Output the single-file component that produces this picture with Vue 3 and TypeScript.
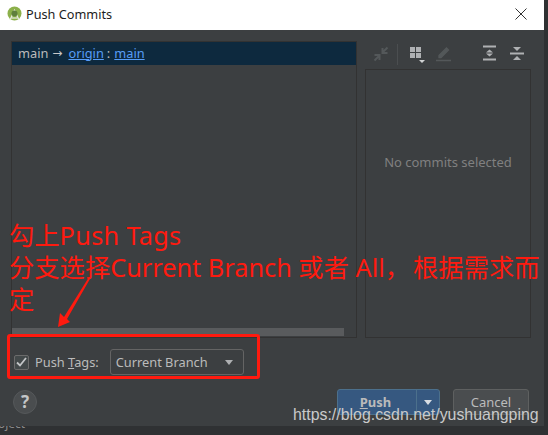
<script setup lang="ts">
const title: string = 'Push Commits'
</script>

<template>
  <div class="screen">
    <div class="bottom-strip">Project</div>
    <div class="dialog">
      <header class="titlebar">
        <svg class="logo" width="15" height="16" viewBox="0 0 15 16">
          <circle cx="7.500" cy="7.500" r="7" fill="#8cb04a" />
          <path d="M3 14 7.500 4.500 12 14" fill="none" stroke="#e8e8e0" stroke-width="1.400" />
          <circle cx="7.500" cy="7.500" r="3" fill="#5f7f3c" />
          <path d="M4.500 12h6" stroke="#dfe4d0" stroke-width="1.400" />
        </svg>
        <span class="title">{{ title }}</span>
        <svg class="close" width="12" height="12" viewBox="0 0 12 12">
          <path d="M.5.5l11 11M11.500.5l-11 11" stroke="#333" stroke-width="1" fill="none" />
        </svg>
      </header>

      <main class="content">
        <div class="panes">
          <section class="tree">
            <div class="branch-row">
              <span>main</span>
              <span class="arrow">→</span>
              <a class="link">origin</a>
              <span class="colon">:</span>
              <a class="link">main</a>
            </div>
            <div class="tree-body"></div>
            <div class="scrollbar"></div>
          </section>

          <section class="details">
            <div class="toolbar">
              <svg class="ico" width="16" height="16" viewBox="0 0 16 16">
                <path d="M14.500 1.500 10 6M9.500 2v5h5M1.500 14.500 6 10M6.500 14V9h-5" fill="none" stroke="#54585a" stroke-width="2" />
              </svg>
              <span class="divider"></span>
              <svg class="ico grid" width="16" height="18" viewBox="0 0 16 18">
                <path d="M1 2h5v5H1zM7 2h5v5H7zM1 8h5v5H1zM7 8h5v5H7z" fill="#afb1b3" />
                <path d="M10 15h6l-3 3z" fill="#d0d2d3" />
              </svg>
              <svg class="ico pencil" width="16" height="16" viewBox="0 0 16 16">
                <path d="M4 9.500 11.500 2l2 2L6 11.500H4zM1 14.500h15" fill="#54585a" stroke="#54585a" stroke-width="1.300" />
              </svg>
              <svg class="ico expand" width="13" height="18" viewBox="0 0 13 18">
                <path d="M0 .5h13v2H0zM0 13.500h13v2H0z" fill="#afb1b3" />
                <path d="M6.500 4.500 10 7.500H3zM6.500 11.500 3 8.500h7z" fill="#afb1b3" />
              </svg>
              <svg class="ico collapse" width="14" height="18" viewBox="0 0 14 18">
                <path d="M0 7.500h14v2H0z" fill="#afb1b3" />
                <path d="M3 2h8L7 6zM7 11l4 4H3z" fill="#afb1b3" />
              </svg>
            </div>
            <div class="details-body">No commits selected</div>
          </section>
        </div>

        <div class="tags-row">
          <span class="checkbox">
            <svg width="11" height="10" viewBox="0 0 11 10">
              <path d="M1 5.500 4 8.500 10 1" fill="none" stroke="#c4c6c8" stroke-width="1.800" />
            </svg>
          </span>
          <span class="tags-label">Push <u>T</u>ags:</span>
          <div class="select">
            <span>Current Branch</span>
            <i class="caret"></i>
          </div>
        </div>

        <footer class="actions">
          <button class="help" type="button">?</button>
          <div class="buttons">
            <div class="push">
              <span class="push-main"><u>P</u>ush</span>
              <span class="push-more"><i class="caret light"></i></span>
            </div>
            <button class="cancel" type="button">Cancel</button>
          </div>
        </footer>
      </main>
    </div>

    <div class="annotation">
      <div class="note-line">勾上<span class="wide">Push Tags</span></div>
      <div class="note-line">分支选择Current Branch 或者 All，<span class="gap">根据需求而</span></div>
      <div class="note-line">定</div>
    </div>
    <svg class="pointer" width="44" height="56" viewBox="0 0 44 56">
      <path d="M39 2 14 42l-4-4-2 14 12-5-3-3L40.500 3z" fill="#ff1a0f" />
    </svg>
    <div class="red-box"></div>
    <div class="watermark">https://blog.csdn.net/yushuangping</div>
  </div>
</template>

<style scoped>
.screen {
  position: relative;
  width: 548px;
  height: 435px;
  overflow: hidden;
  background: #2f3133;
  font-family: "Noto Sans", "Open Sans", sans-serif;
}
.dialog {
  position: relative;
  width: 544px;
  height: 426px;
  display: flex;
  flex-direction: column;
  background: #3c3f41;
}
.titlebar {
  height: 30px;
  flex: none;
  display: flex;
  align-items: center;
  padding: 0 17px 2px 7px;
  background: #fff;
  box-sizing: border-box;
}
.logo { margin-right: 4px; }
.title {
  font-size: 12.700px;
  color: #1d1d1d;
}
.close { margin-left: auto; }
.content {
  flex: 1;
  display: flex;
  flex-direction: column;
  padding: 11px 13px 0 11px;
  min-height: 0;
}
.panes {
  height: 297px;
  display: flex;
  gap: 8px;
  flex: none;
}
.tree {
  width: 346px;
  box-sizing: border-box;
  border: 1px solid #323232;
  display: flex;
  flex-direction: column;
}
.branch-row {
  height: 23px;
  flex: none;
  box-sizing: border-box;
  display: flex;
  align-items: center;
  gap: 4px;
  padding: 0 0 2px 6px;
  background: #0d293e;
  color: #bbbbbb;
  font-size: 12.800px;
}
.arrow {
  margin-right: 2px;
  font-size: 12px;
  color: #c8c8c8;
  font-family: "DejaVu Sans", sans-serif;
}
.colon { margin-left: -1px; }
.link {
  color: #589df6;
  text-decoration: underline;
}
.tree-body { flex: 1; }
.scrollbar {
  height: 8px;
  width: 332px;
  margin-bottom: 1px;
  background: #595b5d;
}
.details {
  flex: 1;
  display: flex;
  flex-direction: column;
}
.toolbar {
  height: 28px;
  flex: none;
  box-sizing: border-box;
  display: flex;
  align-items: center;
  padding: 0 0 2px 8px;
}
.ico { flex: none; }
.divider {
  width: 1px;
  height: 21px;
  margin-left: 8px;
  background: #4b4e50;
}
.grid { margin-left: 11px; }
.pencil { margin-left: 10px; }
.expand { margin-left: 32px; }
.collapse { margin-left: 14px; }
.details-body {
  flex: 1;
  box-sizing: border-box;
  border: 1px solid #323232;
  display: flex;
  align-items: center;
  justify-content: center;
  padding-bottom: 83px;
  color: #808080;
  font-size: 13px;
}
.tags-row {
  display: flex;
  align-items: center;
  height: 26px;
  margin: 11px 0 0 3px;
  color: #bbbbbb;
  font-size: 12.800px;
}
.checkbox {
  width: 13px;
  height: 13px;
  display: flex;
  align-items: center;
  justify-content: center;
  background: #43494a;
  border: 1px solid #6b6b6b;
  border-radius: 2px;
}
.tags-label { margin-left: 6px; }
.select {
  width: 134px;
  height: 26px;
  box-sizing: border-box;
  margin-left: 11px;
  padding: 0 10px 0 5px;
  display: flex;
  align-items: center;
  justify-content: space-between;
  border: 1px solid #646464;
  border-radius: 3px;
  background: #3c3f41;
}
.caret {
  width: 0;
  height: 0;
  border-left: 4.500px solid transparent;
  border-right: 4.500px solid transparent;
  border-top: 5px solid #aeb0b2;
}
.caret.light { border-top-color: #d8dde3; }
.actions {
  flex: 1;
  display: flex;
  justify-content: space-between;
  padding: 15px 0 0 2px;
}
.help {
  width: 24px;
  height: 24px;
  padding: 0;
  border: 1px solid #55585a;
  border-radius: 50%;
  background: #4a4d4f;
  color: #c4c6c8;
  font: 700 17px "Noto Sans", sans-serif;
  line-height: 20px;
}
.buttons {
  display: flex;
  gap: 13px;
  height: 26px;
  margin-right: 2px;
  margin-top: -1px;
}
.push {
  width: 103px;
  display: flex;
  box-sizing: border-box;
  border: 1px solid #4c708c;
  border-radius: 3px;
  background: #365880;
  color: #bbbbbb;
  font-size: 13px;
  font-weight: 700;
}
.push-main {
  width: 79px;
  box-sizing: border-box;
  padding-right: 3px;
  display: flex;
  align-items: center;
  justify-content: center;
  white-space: pre;
  border-right: 1px solid #4c708c;
}
.push-more {
  flex: 1;
  display: flex;
  align-items: center;
  justify-content: center;
}
.cancel {
  width: 76px;
  padding: 0;
  border: 1px solid #5e6060;
  border-radius: 3px;
  background: #4a4d4f;
  color: #bbbbbb;
  font: 13px "Noto Sans", sans-serif;
}
.bottom-strip {
  position: absolute;
  left: -14px;
  top: 417px;
  font-size: 12px;
  line-height: 14px;
  color: #8a8a8a;
}
.annotation {
  position: absolute;
  left: 9px;
  top: 219px;
  font-family: "Noto Sans", "Noto Sans CJK SC", sans-serif;
  font-size: 25.300px;
  color: #ff1a0f;
  white-space: pre;
}
.note-line {
  height: 32px;
  line-height: 32px;
}
.wide { letter-spacing: 0.300px; }
.gap { margin-left: 3px; }
.pointer {
  position: absolute;
  left: 50px;
  top: 275px;
}
.red-box {
  position: absolute;
  left: 7px;
  top: 334px;
  width: 253px;
  height: 45px;
  box-sizing: border-box;
  border: 3px solid #ff1a0f;
  border-radius: 3px;
}
.watermark {
  position: absolute;
  left: 293px;
  top: 403px;
  font-family: "Liberation Sans", Arial, sans-serif;
  font-size: 15.900px;
  line-height: 24px;
  color: #c9caca;
  white-space: nowrap;
}
</style>
